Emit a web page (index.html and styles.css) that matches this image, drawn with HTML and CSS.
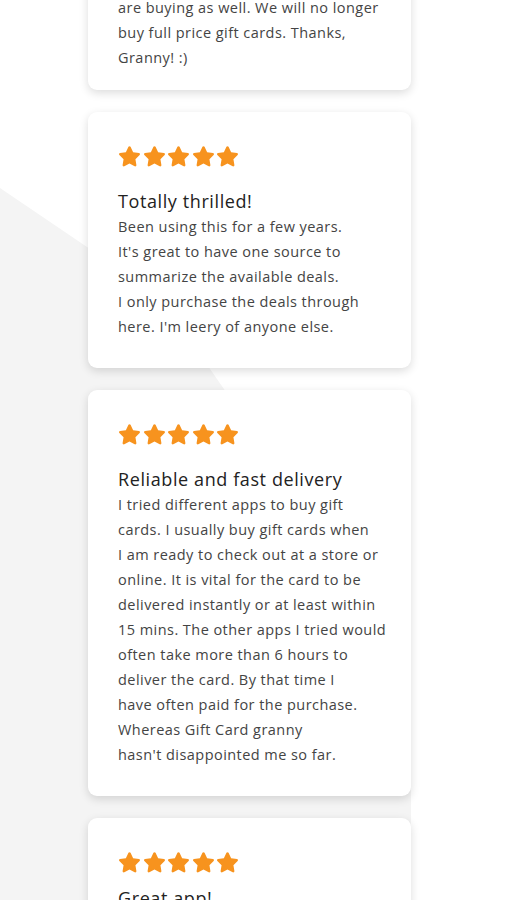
FILE: index.html
```html
<!DOCTYPE html>
<html lang="en">
<head>
  <meta charset="UTF-8" />
  <title>Gift Card Granny - Reviews</title>
  <meta name="viewport" content="width=device-width, initial-scale=1.0" />
  <link rel="stylesheet" href="styles.css">
</head>
<body>

<div class="bg-shape"></div>

<svg width="0" height="0" class="defs">
  <defs>
    <symbol id="star" viewBox="0 0 24 23">
      <path d="M12 1.2c.5 0 .9.3 1.1.7l2.7 5.6 6.1.9c1 .1 1.4 1.4.7 2.1l-4.4 4.3 1 6.1c.2 1-.9 1.8-1.8 1.3L12 19.3l-5.4 2.9c-.9.5-2-.3-1.8-1.3l1-6.1-4.4-4.3c-.7-.7-.3-2 .7-2.1l6.1-.9 2.7-5.6c.2-.4.6-.7 1.1-.7z"/>
    </symbol>
  </defs>
</svg>

<main class="reviews">

  <div class="review review--first">
    <div class="stars">
      <svg><use href="#star"/></svg><svg><use href="#star"/></svg><svg><use href="#star"/></svg><svg><use href="#star"/></svg><svg><use href="#star"/></svg>
    </div>
    <h3>Saves us money!</h3>
    <p>My family and I use it every time<br>
    we shop and now our friends<br>
    are buying as well. We will no longer<br>
    buy full price gift cards. Thanks,<br>
    Granny! :)</p>
  </div>

  <div class="review">
    <div class="stars">
      <svg><use href="#star"/></svg><svg><use href="#star"/></svg><svg><use href="#star"/></svg><svg><use href="#star"/></svg><svg><use href="#star"/></svg>
    </div>
    <h3>Totally thrilled!</h3>
    <p>Been using this for a few years.<br>
    It's great to have one source to<br>
    summarize the available deals.<br>
    I only purchase the deals through<br>
    here. I'm leery of anyone else.</p>
  </div>

  <div class="review">
    <div class="stars">
      <svg><use href="#star"/></svg><svg><use href="#star"/></svg><svg><use href="#star"/></svg><svg><use href="#star"/></svg><svg><use href="#star"/></svg>
    </div>
    <h3>Reliable and fast delivery</h3>
    <p>I tried different apps to buy gift<br>
    cards. I usually buy gift cards when<br>
    I am ready to check out at a store or<br>
    online. It is vital for the card to be<br>
    delivered instantly or at least within<br>
    15 mins. The other apps I tried would<br>
    often take more than 6 hours to<br>
    deliver the card. By that time I<br>
    have often paid for the purchase.<br>
    Whereas Gift Card granny<br>
    hasn't disappointed me so far.</p>
  </div>

  <div class="review review--last">
    <div class="stars">
      <svg><use href="#star"/></svg><svg><use href="#star"/></svg><svg><use href="#star"/></svg><svg><use href="#star"/></svg><svg><use href="#star"/></svg>
    </div>
    <h3>Great app!</h3>
    <p>Easy to use and the savings<br>
    add up quickly.</p>
  </div>

</main>

</body>
</html>
```

FILE: styles.css
```css
body {
  margin: 0;
  font-family: 'Open Sans', 'Liberation Sans', sans-serif;
  background-color: #fff;
  position: relative;
  height: 900px;
  overflow: hidden;
}

.defs {
  position: absolute;
}

/* fondo gris diagonal detras de las tarjetas */
.bg-shape {
  position: absolute;
  top: 0;
  left: 0;
  right: 0;
  bottom: 0;
  background-color: #f4f4f4;
  clip-path: polygon(0 188px, 90px 249px, 190px 340px, 226px 392px, 411px 700px, 411px 900px, 0 900px);
}

.reviews {
  position: relative;
  display: flex;
  flex-direction: column;
  gap: 22px;
  width: 323px;
  margin: -157px 0 0 88px;
}

.review {
  background-color: #fff;
  border-radius: 9px;
  padding: 32px 30px 29px;
  box-shadow: 0 3px 10px rgba(0, 0, 0, 0.14);
}

.review--first {
  padding-bottom: 20px;
}

.stars {
  display: flex;
  align-items: center;
  gap: 1.5px;
  height: 24px;
}

.stars svg {
  width: 23px;
  height: 22px;
  fill: #f7931e;
}

.review h3 {
  margin: 21px 0 0;
  font-size: 18px;
  line-height: 25px;
  font-weight: 500;
  letter-spacing: 0.6px;
  color: #222;
}

.review--last h3 {
  margin-top: 12px;
}

.review p {
  margin: 0;
  font-size: 14.5px;
  line-height: 25px;
  letter-spacing: 0.45px;
  color: #444;
  white-space: nowrap;
}
```
